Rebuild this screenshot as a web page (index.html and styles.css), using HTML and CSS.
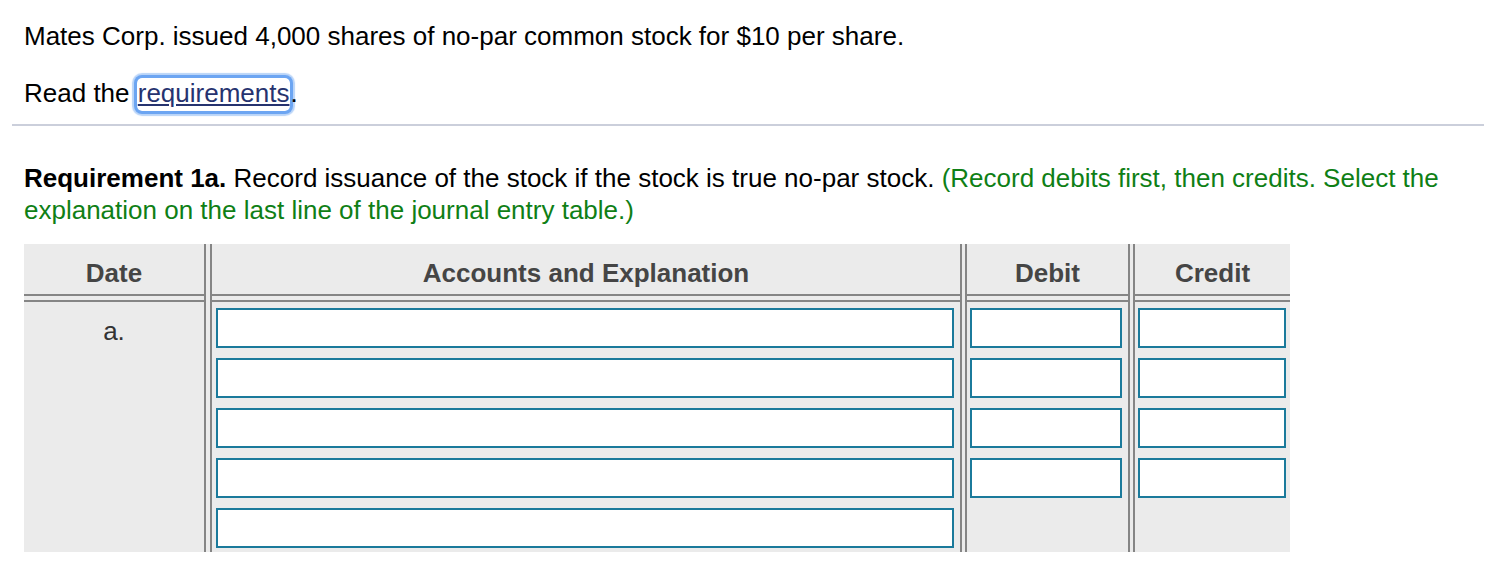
FILE: index.html
```html
<!DOCTYPE html>
<html lang="en">
<head>
<meta charset="utf-8">
<title>Journal entry</title>
<link rel="stylesheet" href="styles.css">
</head>
<body>
<div class="page">
  <p class="text first">Mates Corp. issued 4,000 shares of no-par common stock for $10 per share.</p>
  <p class="text second">Read the <a class="req-link" href="#">requirements</a>.</p>
  <hr class="rule">
  <p class="text req"><b>Requirement 1a.</b> Record issuance of the stock if the stock is true no-par stock. <span class="hint">(Record debits first, then credits. Select the explanation on the last line of the journal entry table.)</span></p>
  <div class="journal">
    <div class="col col-date">
      <div class="th">Date</div>
      <div class="td date-cell">a.</div>
    </div>
    <div class="col col-acct">
      <div class="th">Accounts and Explanation</div>
      <div class="td">
        <input class="field" type="text">
        <input class="field" type="text">
        <input class="field" type="text">
        <input class="field" type="text">
        <input class="field" type="text">
      </div>
    </div>
    <div class="col col-debit">
      <div class="th">Debit</div>
      <div class="td">
        <input class="field" type="text">
        <input class="field" type="text">
        <input class="field" type="text">
        <input class="field" type="text">
      </div>
    </div>
    <div class="col col-credit">
      <div class="th">Credit</div>
      <div class="td">
        <input class="field" type="text">
        <input class="field" type="text">
        <input class="field" type="text">
        <input class="field" type="text">
      </div>
    </div>
  </div>
</div>
</body>
</html>
```
FILE: styles.css
```css
html, body {
  margin: 0;
  padding: 0;
  background: #ffffff;
}

body {
  font-family: "Liberation Sans", Arial, Helvetica, sans-serif;
  font-size: 26px;
  line-height: 32px;
  color: #000000;
}

.page {
  padding: 20px 10px 0 12px;
}

.text {
  margin: 0;
  padding-left: 12px;
}

.second {
  margin-top: 25px;
}

.req-link {
  color: #26336f;
  text-decoration: underline;
  text-underline-offset: 2px;
  border-radius: 5px;
  padding: 0 1px 3px;
  box-shadow: 0 0 0 3px #6ca5f2, 0 0 1px 5px #b9d4f8;
}

.rule {
  margin: 15px 0 0 0;
  border: 0;
  height: 2px;
  background: #cbcfdb;
}

.req {
  margin-top: 36px;
}

.req b {
  font-weight: bold;
}

.hint {
  color: #0f7f16;
}

.journal {
  display: flex;
  align-items: stretch;
  margin: 18px 0 0 12px;
  width: 1266px;
  height: 308px;
  background: #ebebeb;
}

.col {
  display: flex;
  flex-direction: column;
  box-sizing: border-box;
  border: 0 solid #858585;
}

.col-date {
  width: 182px;
  border-right-width: 2px;
}

.col-acct {
  width: 752px;
  margin-left: 4px;
  border-left-width: 2px;
  border-right-width: 2px;
}

.col-debit {
  width: 165px;
  margin-left: 3px;
  border-left-width: 2px;
  border-right-width: 2px;
}

.col-credit {
  width: 157px;
  margin-left: 3px;
  border-left-width: 2px;
}

.th {
  box-sizing: border-box;
  height: 52px;
  padding-top: 8px;
  line-height: 42px;
  border-bottom: 2px solid #858585;
  text-align: center;
  font-weight: bold;
  color: #454545;
}

.td {
  flex: 1;
  margin-top: 4px;
  border-top: 2px solid #858585;
  padding: 6px 0 4px 0;
  display: flex;
  flex-direction: column;
  gap: 10px;
}

.date-cell {
  display: block;
  padding-top: 13px;
  text-align: center;
  color: #333333;
}

.field {
  display: block;
  box-sizing: border-box;
  height: 40px;
  margin: 0;
  padding: 0 6px;
  border: 2px solid #1b7a9b;
  border-radius: 0;
  background: #ffffff;
  font-family: "Liberation Sans", Arial, sans-serif;
  font-size: 18px;
  outline: none;
}

.col-acct .td { padding-left: 4px; }
.col-acct .field { width: 738px; }

.col-debit .td { padding-left: 3px; }
.col-debit .field { width: 152px; }

.col-credit .td { padding-left: 3px; }
.col-credit .field { width: 148px; }
```
